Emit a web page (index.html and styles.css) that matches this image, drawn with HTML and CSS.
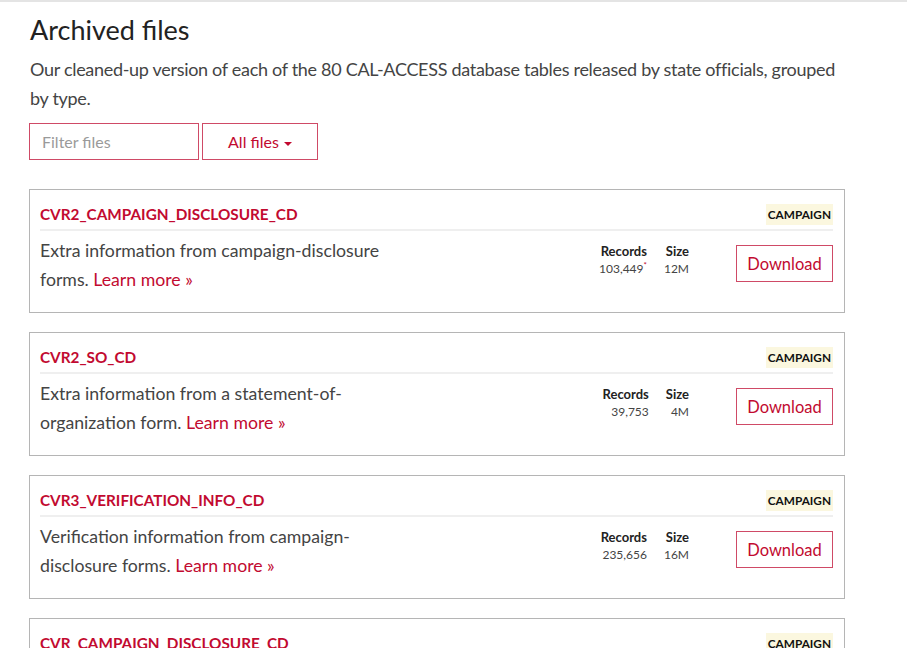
FILE: index.html
```html
<!DOCTYPE html>
<html lang="en">
<head>
<meta charset="utf-8">
<title>Archived files</title>
<link rel="stylesheet" href="styles.css">
</head>
<body>
<main class="page">
  <h1 class="title">Archived files</h1>
  <p class="lede">Our cleaned-up version of each of the 80 CAL-ACCESS database tables released by state officials, grouped by type.</p>
  <div class="filters">
    <input class="filter-input" type="text" placeholder="Filter files">
    <button class="filter-btn" type="button">All files <span class="caret"></span></button>
  </div>

  <section class="files">
    <article class="card">
      <header class="card-head">
        <a class="card-name" href="#">CVR2_CAMPAIGN_DISCLOSURE_CD</a>
        <span class="badge">CAMPAIGN</span>
      </header>
      <div class="card-body">
        <p class="desc">Extra information from campaign-disclosure forms. <a href="#" class="more">Learn more »</a></p>
        <div class="stats">
          <div class="stat stat-records"><span class="stat-label">Records</span><span class="stat-value">103,449<sup class="note">*</sup></span></div>
          <div class="stat stat-size"><span class="stat-label">Size</span><span class="stat-value">12M</span></div>
        </div>
        <a class="download" href="#">Download</a>
      </div>
    </article>

    <article class="card">
      <header class="card-head">
        <a class="card-name" href="#">CVR2_SO_CD</a>
        <span class="badge">CAMPAIGN</span>
      </header>
      <div class="card-body">
        <p class="desc">Extra information from a statement-of-organization form. <a href="#" class="more">Learn more »</a></p>
        <div class="stats">
          <div class="stat stat-records"><span class="stat-label">Records</span><span class="stat-value">39,753</span></div>
          <div class="stat stat-size"><span class="stat-label">Size</span><span class="stat-value">4M</span></div>
        </div>
        <a class="download" href="#">Download</a>
      </div>
    </article>

    <article class="card">
      <header class="card-head">
        <a class="card-name" href="#">CVR3_VERIFICATION_INFO_CD</a>
        <span class="badge">CAMPAIGN</span>
      </header>
      <div class="card-body">
        <p class="desc">Verification information from campaign-disclosure forms. <a href="#" class="more">Learn more »</a></p>
        <div class="stats">
          <div class="stat stat-records"><span class="stat-label">Records</span><span class="stat-value">235,656</span></div>
          <div class="stat stat-size"><span class="stat-label">Size</span><span class="stat-value">16M</span></div>
        </div>
        <a class="download" href="#">Download</a>
      </div>
    </article>

    <article class="card">
      <header class="card-head">
        <a class="card-name" href="#">CVR_CAMPAIGN_DISCLOSURE_CD</a>
        <span class="badge">CAMPAIGN</span>
      </header>
      <div class="card-body">
        <p class="desc">Cover page of campaign-disclosure forms. <a href="#" class="more">Learn more »</a></p>
        <div class="stats">
          <div class="stat stat-records"><span class="stat-label">Records</span><span class="stat-value">4,718,442</span></div>
          <div class="stat stat-size"><span class="stat-label">Size</span><span class="stat-value">1G</span></div>
        </div>
        <a class="download" href="#">Download</a>
      </div>
    </article>
  </section>
</main>
</body>
</html>
```

FILE: styles.css
```css
* { box-sizing: border-box; }

html, body {
  margin: 0;
  padding: 0;
  background: #fff;
}

body {
  font-family: Lato, "Liberation Sans", sans-serif;
  color: #222;
  border-top: 2px solid #e4e4e4;
  overflow: hidden;
}

.page {
  width: 816px;
  margin-left: 29px;
  padding-top: 11px;
}

.title {
  margin: 0 0 0 1px;
  font-size: 27px;
  font-weight: 400;
  line-height: 34px;
  color: #222;
}

.lede {
  margin: 8px 0 0 1px;
  font-size: 18px;
  line-height: 29px;
  letter-spacing: -0.3px;
  color: #444;
  width: 815px;
}

.filters {
  display: flex;
  gap: 3px;
  margin-top: 10px;
}

.filter-input {
  width: 170px;
  height: 37px;
  border: 1px solid #cf4a66;
  padding: 0 12px;
  font-family: inherit;
  font-size: 16px;
  color: #333;
  outline: none;
}
.filter-input::placeholder { color: #9a9a9a; }

.filter-btn {
  width: 116px;
  height: 37px;
  border: 1px solid #cf4a66;
  background: #fff;
  color: #c20a30;
  font-family: inherit;
  font-size: 16px;
  padding: 0;
}

.caret {
  display: inline-block;
  width: 0;
  height: 0;
  margin-left: 1px;
  vertical-align: middle;
  border-top: 4px solid #c20a30;
  border-left: 4px solid transparent;
  border-right: 4px solid transparent;
}

.files {
  margin-top: 29px;
  display: flex;
  flex-direction: column;
  gap: 19px;
}

.card {
  border: 1px solid #b5b5b5;
  padding: 0 11px 0 10px;
  height: 124px;
  flex: none;
}

.card-head {
  display: flex;
  justify-content: space-between;
  align-items: center;
  padding-top: 14px;
  padding-bottom: 4px;
  border-bottom: 2px solid #efefef;
}

.card-name {
  color: #c20a30;
  font-weight: 700;
  font-size: 15.3px;
  text-decoration: none;
  line-height: 21px;
}

.badge {
  background: #fbf7df;
  color: #111;
  font-weight: 700;
  font-size: 11.8px;
  line-height: 21px;
  padding: 0 2px;
}

.card-body {
  display: flex;
  align-items: flex-start;
  padding-top: 5px;
}

.desc {
  margin: 0;
  width: 350px;
  font-size: 17.7px;
  line-height: 29px;
  color: #444;
}

.more {
  color: #c20a30;
  text-decoration: none;
}

.stats {
  display: flex;
  gap: 17px;
  margin-left: auto;
  margin-top: 7px;
}

.stat {
  display: flex;
  flex-direction: column;
  align-items: flex-end;
}

.stat-label {
  font-size: 13px;
  font-weight: 700;
  line-height: 17px;
  color: #222;
}

.stat-value {
  font-size: 12px;
  line-height: 17px;
  color: #444;
  position: relative;
}

.note {
  color: #c20a30;
  font-size: 8px;
  line-height: 0;
  vertical-align: 5px;
}

.download {
  margin-left: 47px;
  margin-top: 9px;
  width: 97px;
  height: 37px;
  border: 1px solid #cf4a66;
  color: #c20a30;
  text-decoration: none;
  font-size: 16.5px;
  display: flex;
  align-items: center;
  justify-content: center;
}
```
